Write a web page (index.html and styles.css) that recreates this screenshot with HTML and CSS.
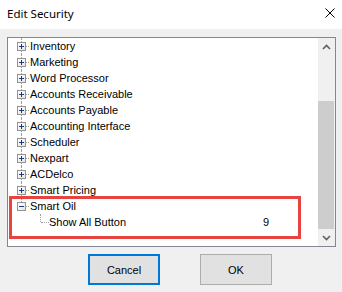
FILE: index.html
```html
<!DOCTYPE html>
<html>
<head>
<meta charset="utf-8">
<link rel="stylesheet" href="styles.css">
</head>
<body>
<div class="window">
  <div class="titlebar">
    <span class="title">Edit Security</span>
    <svg class="close" width="10" height="10" viewBox="0 0 10 10"><path d="M0.5 0.5 L9.5 9.5 M9.5 0.5 L0.5 9.5" stroke="#000" stroke-width="1" fill="none"/></svg>
  </div>
  <div class="content">
    <div class="tree">
      <div class="list">
        <div class="row"><span class="exp"><span class="box plus"></span></span><span class="label">Inventory</span></div>
        <div class="row"><span class="exp"><span class="box plus"></span></span><span class="label">Marketing</span></div>
        <div class="row"><span class="exp"><span class="box plus"></span></span><span class="label">Word Processor</span></div>
        <div class="row"><span class="exp"><span class="box plus"></span></span><span class="label">Accounts Receivable</span></div>
        <div class="row"><span class="exp"><span class="box plus"></span></span><span class="label">Accounts Payable</span></div>
        <div class="row"><span class="exp"><span class="box plus"></span></span><span class="label">Accounting Interface</span></div>
        <div class="row"><span class="exp"><span class="box plus"></span></span><span class="label">Scheduler</span></div>
        <div class="row"><span class="exp"><span class="box plus"></span></span><span class="label">Nexpart</span></div>
        <div class="row"><span class="exp"><span class="box plus"></span></span><span class="label">ACDelco</span></div>
        <div class="row"><span class="exp"><span class="box plus"></span></span><span class="label">Smart Pricing</span></div>
        <div class="row"><span class="exp last"><span class="box minus"></span></span><span class="label">Smart Oil</span></div>
        <div class="row"><span class="exp child"></span><span class="label">Show All Button</span><span class="val">9</span></div>
        <div class="highlight"></div>
      </div>
      <div class="scrollbar">
        <div class="sbtn"><svg width="9" height="6" viewBox="0 0 9 6"><path d="M1 5 L4.5 1.5 L8 5" stroke="#606060" stroke-width="1.6" fill="none"/></svg></div>
        <div class="track"><div class="thumb"></div></div>
        <div class="sbtn"><svg width="9" height="6" viewBox="0 0 9 6"><path d="M1 1 L4.5 4.5 L8 1" stroke="#606060" stroke-width="1.6" fill="none"/></svg></div>
      </div>
    </div>
    <div class="buttons">
      <div class="btn focused">Cancel</div>
      <div class="btn">OK</div>
    </div>
  </div>
</div>
</body>
</html>
```

FILE: styles.css
```css
html, body {
  margin: 0;
  padding: 0;
  background: #f0f0f0;
}
.window {
  width: 342px;
  height: 292px;
  display: flex;
  flex-direction: column;
  background: #f0f0f0;
  font-family: "Liberation Sans", Arial, sans-serif;
  font-size: 11px;
  color: #000;
  overflow: hidden;
}
.titlebar {
  height: 29px;
  background: #fff;
  display: flex;
  align-items: center;
  padding: 0 8px 0 7px;
  flex-shrink: 0;
}
.title {
  font-family: "Noto Sans", sans-serif;
  font-size: 11.5px;
  flex: 1;
  margin-top: -2px;
}
.close {
  margin-right: -1px;
  margin-top: -4px;
}
.content {
  display: flex;
  flex-direction: column;
  padding: 8px 6px 0 7px;
}
.tree {
  height: 210px;
  box-sizing: border-box;
  border: 1px solid #828790;
  background: #fff;
  display: flex;
}
.list {
  flex: 1;
  position: relative;
}
.row {
  height: 16px;
  display: flex;
  align-items: center;
  line-height: 16px;
  white-space: nowrap;
}
.exp {
  width: 22px;
  height: 16px;
  position: relative;
  flex-shrink: 0;
}
.exp::before {
  content: "";
  position: absolute;
  left: 13px;
  top: 0;
  height: 16px;
  border-left: 1px dotted #a0a0a0;
}
.exp::after {
  content: "";
  position: absolute;
  left: 18px;
  top: 8px;
  width: 3px;
  border-top: 1px dotted #a0a0a0;
}
.exp.last::before {
  height: 8px;
}
.exp.child {
  margin-left: 19px;
}
.exp.child::before {
  height: 8px;
}
.exp.child::after {
  left: 14px;
  width: 8px;
}
.label {
  padding-left: 0;
}
.box {
  position: absolute;
  left: 9px;
  top: 4px;
  width: 9px;
  height: 9px;
  box-sizing: border-box;
  border: 1px solid #939393;
  background: linear-gradient(135deg, #ffffff 0%, #e4e4e4 100%);
  z-index: 1;
}
.box::before {
  content: "";
  position: absolute;
  left: 1px;
  top: 3px;
  width: 5px;
  height: 1px;
  background: #1e3a7a;
}
.plus::after {
  content: "";
  position: absolute;
  left: 3px;
  top: 1px;
  width: 1px;
  height: 5px;
  background: #1e3a7a;
}
.val {
  margin-left: auto;
  margin-right: 49px;
}
.highlight {
  position: absolute;
  left: 1px;
  top: 158px;
  width: 292px;
  height: 43px;
  box-sizing: border-box;
  border: 3px solid #e8443f;
}
.scrollbar {
  width: 17px;
  background: #f0f0f0;
  display: flex;
  flex-direction: column;
}
.sbtn {
  height: 17px;
  display: flex;
  align-items: center;
  justify-content: center;
}
.track {
  flex: 1;
  display: flex;
  flex-direction: column;
  justify-content: flex-end;
}
.thumb {
  height: 128px;
  margin: 0 1px 0 0;
  background: #cdcdcd;
}
.buttons {
  display: flex;
  gap: 40px;
  padding-left: 81px;
  margin-top: 7px;
}
.btn {
  width: 72px;
  height: 31px;
  box-sizing: border-box;
  border: 1px solid #adadad;
  background: #e1e1e1;
  display: flex;
  align-items: center;
  justify-content: center;
}
.btn.focused {
  border: 2px solid #0078d7;
}
```
